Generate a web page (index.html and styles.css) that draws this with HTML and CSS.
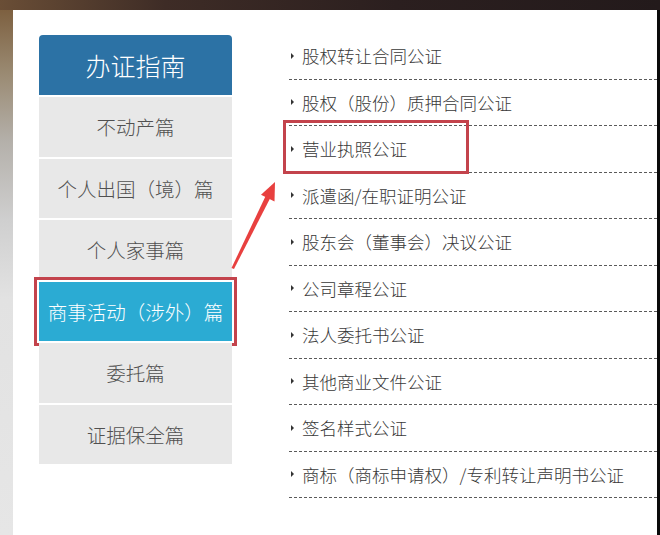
FILE: index.html
```html
<!DOCTYPE html>
<html lang="zh-CN">
<head>
<meta charset="utf-8">
<link rel="stylesheet" href="styles.css">
</head>
<body>
<div class="top"></div>
<div class="main">
  <div class="lstrip"></div>
  <div class="panel">
    <div class="sidebar">
      <div class="sb-head">办证指南</div>
      <div class="sb-item">不动产篇</div>
      <div class="sb-item">个人出国（境）篇</div>
      <div class="sb-item">个人家事篇</div>
      <div class="sb-item active">商事活动（涉外）篇</div>
      <div class="sb-item">委托篇</div>
      <div class="sb-item">证据保全篇</div>
    </div>
    <ul class="list">
      <li>股权转让合同公证</li>
      <li>股权（股份）质押合同公证</li>
      <li class="marked">营业执照公证</li>
      <li>派遣函/在职证明公证</li>
      <li>股东会（董事会）决议公证</li>
      <li>公司章程公证</li>
      <li>法人委托书公证</li>
      <li>其他商业文件公证</li>
      <li>签名样式公证</li>
      <li>商标（商标申请权）/专利转让声明书公证</li>
    </ul>
    <svg class="arrow" width="60" height="100" viewBox="0 0 60 100">
      <polygon points="6.5,93 9,94 45,23.5 40.5,21.3" fill="#e8403f"/>
      <polygon points="50,7 49.5,26.5 36,19.8" fill="#e8403f"/>
    </svg>
  </div>
  <div class="rstrip"></div>
</div>
</body>
</html>
```
FILE: styles.css
```css
html, body {
  margin: 0;
  padding: 0;
  height: 535px;
  overflow: hidden;
}
body {
  font-family: "Microsoft YaHei", "Noto Sans CJK SC", sans-serif;
  background: #fff;
}
.top {
  height: 10px;
  background: linear-gradient(90deg, #6a4e36 0%, #3e2c26 25%, #2b1f1f 60%, #231a1b 100%);
}
.main {
  display: flex;
  height: 525px;
}
.lstrip {
  width: 13px;
  background: linear-gradient(180deg, #7d6040 0%, #9a8a72 12%, #b4b0aa 25%, #cfcfcf 40%, #e2e2e2 55%, #e6e6e6 100%);
}
.rstrip {
  width: 3px;
  background: #0a0a0a;
}
.panel {
  flex: 1;
  position: relative;
  display: flex;
  align-items: flex-start;
  padding: 25px 0 0 26px;
  background: #fff;
}
.sidebar {
  width: 193px;
  display: flex;
  flex-direction: column;
  gap: 2px;
}
.sb-head {
  height: 60px;
  background: #2c72a5;
  border-radius: 4px 4px 0 0;
  color: #fff;
  font-size: 25px;
  font-weight: 300;
  display: flex;
  align-items: center;
  justify-content: center;
}
.sb-item {
  height: 59.5px;
  background: #e8e8e8;
  color: #505050;
  font-size: 19.5px;
  font-weight: 300;
  display: flex;
  align-items: center;
  justify-content: center;
  white-space: nowrap;
}
.sb-item.active {
  background: #2babd3;
  color: #fff;
  outline: 3px solid #c3434c;
  outline-offset: 2px;
}
.list {
  list-style: none;
  margin: -2px 0 0 57px;
  padding: 0;
  flex: 1;
}
.list li {
  position: relative;
  height: 45.5px;
  border-bottom: 1px dashed #5a5a5a;
  display: flex;
  align-items: center;
  padding-left: 13px;
  font-size: 17.5px;
  font-weight: 300;
  color: #383838;
  white-space: nowrap;
}
.list li::before {
  content: "";
  position: absolute;
  left: 2px;
  top: 50%;
  margin-top: -3px;
  border-left: 3px solid #333;
  border-top: 3px solid transparent;
  border-bottom: 3px solid transparent;
}
.list li.marked::after {
  content: "";
  position: absolute;
  left: -6px;
  top: -6px;
  width: 180px;
  height: 48px;
  border: 3px solid #c3434c;
}
.arrow {
  position: absolute;
  left: 212px;
  top: 165px;
}
```
